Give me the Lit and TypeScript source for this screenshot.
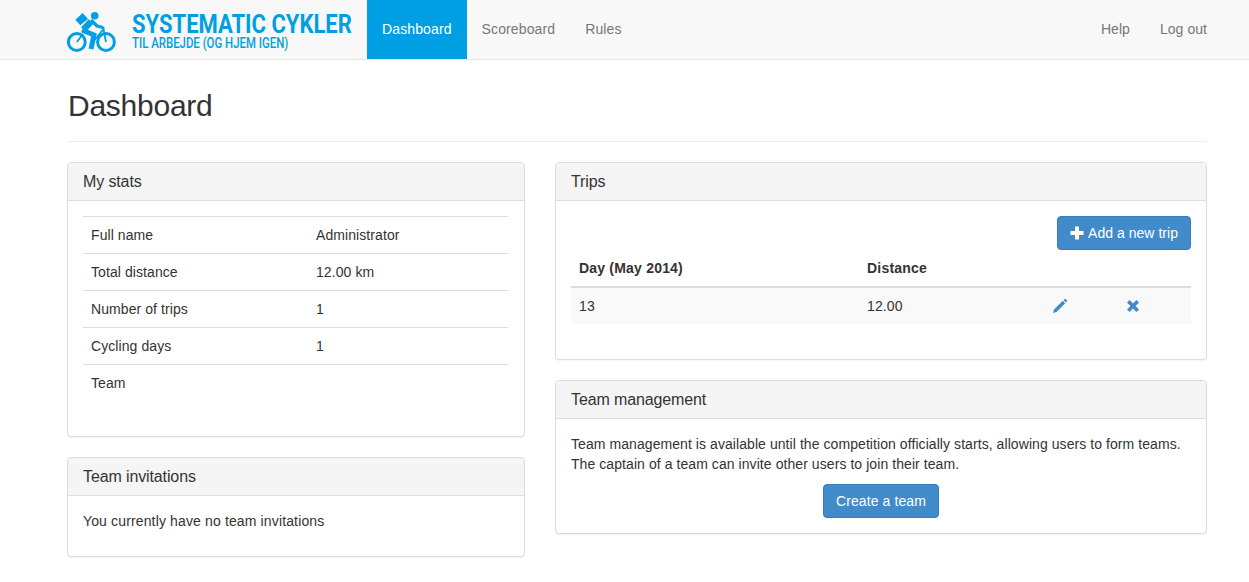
import { LitElement, html, css, svg } from 'lit';
import { customElement } from 'lit/decorators.js';

const BLUE = '#009fe3';

// cyclist logo, drawn by hand
const logo = html`<svg class="logo" width="50" height="42" viewBox="0 0 50 42" fill="none" stroke="${BLUE}">
  ${svg`
    <circle cx="9.8" cy="30" r="8.4" stroke-width="3"></circle>
    <circle cx="39" cy="30" r="8.4" stroke-width="3"></circle>
    <path d="M9.8 30 L16 22 M26 30 L36.5 17 L39 30 M32.5 14.5 L37.5 16" stroke-width="1.8"></path>
    <path d="M24 9.5 L16.5 17.5" stroke-width="6.5"></path>
    <path d="M24 8 L30 14 L36 15.5" stroke-width="3.2"></path>
    <path d="M15 18 L27 23 L24 37" stroke-width="5"></path>
    <circle cx="27.7" cy="3.8" r="3.8" fill="${BLUE}" stroke="none"></circle>
    <path d="M8.3 7.7 L15.7 1 L21 7 L13.3 13.3 Z" fill="${BLUE}" stroke="none"></path>
  `}
</svg>`;

const plus = html`<svg class="glyph" width="14" height="14" viewBox="0 0 14 14" fill="currentColor">
  ${svg`<path d="M5 .5h4V5h4.5v4H9v4.5H5V9H.5V5H5z"></path>`}
</svg>`;

const pencil = html`<svg width="16" height="16" viewBox="0 0 16 16" fill="#428bca">
  ${svg`<path d="M1 15 L2 11.4 L10.8 2.8 L13.2 5.2 L4.6 14 Z M11.6 2 L12.6 1 Q13.1 .6 13.6 1 L15 2.4 Q15.4 2.9 15 3.4 L14 4.4 Z"></path>`}
</svg>`;

const cross = html`<svg class="cross" width="14" height="14" viewBox="0 0 14 14" fill="#428bca">
  ${svg`<path d="M3.6 1 L7 4.4 L10.4 1 L13 3.6 L9.6 7 L13 10.4 L10.4 13 L7 9.6 L3.6 13 L1 10.4 L4.4 7 L1 3.6 Z"></path>`}
</svg>`;

@customElement('app-root')
export class AppRoot extends LitElement {
  static styles = css`
    :host {
      display: block;
      font-family: 'Liberation Sans', Arial, sans-serif;
      font-size: 14px;
      line-height: 20px;
      color: #333;
      background: #fff;
      height: 582px;
      overflow: hidden;
    }
    .navbar {
      height: 59px;
      background: #f8f8f8;
      border-bottom: 1px solid #e7e7e7;
      display: flex;
      padding: 0 42px 0 67px;
    }
    .brand {
      width: 300px;
      display: flex;
      align-items: center;
      gap: 15px;
    }
    .logo {
      flex-shrink: 0;
      align-self: flex-start;
      margin-top: 12px;
    }
    .brand-text {
      color: #009fe3;
      font-family: Roboto, 'Liberation Sans', sans-serif;
      padding-top: 3px;
    }
    /* no condensed family is installed, so the wordmark is squeezed */
    .brand-title {
      font-size: 25px;
      font-weight: 700;
      line-height: 24px;
      white-space: nowrap;
      transform: scaleX(0.88);
      transform-origin: left center;
    }
    .brand-sub {
      font-size: 14px;
      font-weight: 500;
      line-height: 13px;
      white-space: nowrap;
      transform: scaleX(0.815);
      transform-origin: left center;
    }
    .nav {
      display: flex;
    }
    .nav a {
      padding: 0 15px;
      line-height: 59px;
      color: #777;
      letter-spacing: 0.12px;
    }
    .nav a.active {
      color: #fff;
      background: #009fe3;
    }
    .nav.right {
      margin-left: auto;
    }
    .nav.right a {
      letter-spacing: 0.05px;
    }
    .nav.right a:last-child {
      padding-right: 0;
    }
    .page {
      width: 1140px;
      margin-left: 67px;
    }
    .page-header {
      padding: 26px 0 15px;
      border-bottom: 1px solid #eee;
      margin-bottom: 20px;
    }
    h1 {
      margin: 0 0 0 1px;
      font-size: 30px;
      line-height: 40px;
      font-weight: 400;
      letter-spacing: -0.25px;
    }
    .cols {
      display: grid;
      grid-template-columns: 458px 652px;
      gap: 30px;
      align-items: start;
    }
    .panel {
      border: 1px solid #ddd;
      border-radius: 4px;
      box-shadow: 0 1px 1px rgba(0, 0, 0, 0.05);
      margin-bottom: 20px;
      background: #fff;
    }
    .panel-heading {
      height: 37px;
      line-height: 37px;
      padding: 0 15px;
      font-size: 16px;
      letter-spacing: -0.12px;
      background: #f5f5f5;
      border-bottom: 1px solid #ddd;
      border-radius: 3px 3px 0 0;
    }
    .panel-body {
      padding: 15px;
    }
    p {
      margin: 0 0 10px;
      letter-spacing: 0.07px;
    }
    p.invites {
      letter-spacing: 0.14px;
    }
    table {
      border-collapse: collapse;
      margin-bottom: 20px;
    }
    td,
    th {
      padding: 8px;
      text-align: left;
      line-height: 20px;
    }
    .stats {
      width: 425px;
      letter-spacing: 0.08px;
    }
    .stats td {
      border-top: 1px solid #ddd;
    }
    .stats td:first-child {
      width: 209px;
    }
    .trips {
      width: 100%;
      letter-spacing: 0.1px;
    }
    .trips th {
      border-bottom: 2px solid #ddd;
      letter-spacing: 0.2px;
    }
    .trips tbody tr {
      background: #f9f9f9;
    }
    .trips .day {
      width: 272px;
    }
    .trips .dist {
      width: 169px;
    }
    .trips .edit {
      width: 58px;
    }
    .trips svg {
      display: block;
    }
    .trips .cross {
      margin-top: -1px;
    }
    .actions {
      display: flex;
      justify-content: flex-end;
    }
    .center {
      display: flex;
      justify-content: center;
    }
    .btn {
      display: inline-flex;
      align-items: center;
      height: 34px;
      box-sizing: border-box;
      padding: 0 12px;
      color: #fff;
      background: #428bca;
      border: 1px solid #357ebd;
      border-radius: 4px;
      letter-spacing: 0.1px;
    }
    .actions .btn {
      letter-spacing: 0.03px;
    }
    .glyph {
      margin-right: 4px;
    }
  `;

  render() {
    const stats = [
      ['Full name', 'Administrator'],
      ['Total distance', '12.00 km'],
      ['Number of trips', '1'],
      ['Cycling days', '1'],
      ['Team', ''],
    ];
    return html`
      <nav class="navbar">
        <div class="brand">
          ${logo}
          <div class="brand-text">
            <div class="brand-title">SYSTEMATIC CYKLER</div>
            <div class="brand-sub">TIL ARBEJDE (OG HJEM IGEN)</div>
          </div>
        </div>
        <div class="nav">
          <a class="active">Dashboard</a>
          <a>Scoreboard</a>
          <a>Rules</a>
        </div>
        <div class="nav right">
          <a>Help</a>
          <a>Log out</a>
        </div>
      </nav>
      <main class="page">
        <div class="page-header"><h1>Dashboard</h1></div>
        <div class="cols">
          <div>
            <section class="panel">
              <div class="panel-heading">My stats</div>
              <div class="panel-body">
                <table class="stats">
                  ${stats.map(([k, v]) => html`<tr><td>${k}</td><td>${v}</td></tr>`)}
                </table>
              </div>
            </section>
            <section class="panel">
              <div class="panel-heading">Team invitations</div>
              <div class="panel-body"><p class="invites">You currently have no team invitations</p></div>
            </section>
          </div>
          <div>
            <section class="panel">
              <div class="panel-heading">Trips</div>
              <div class="panel-body">
                <div class="actions"><a class="btn">${plus}Add a new trip</a></div>
                <table class="trips">
                  <thead>
                    <tr>
                      <th class="day">Day (May 2014)</th>
                      <th class="dist">Distance</th>
                      <th class="edit"></th>
                      <th></th>
                    </tr>
                  </thead>
                  <tbody>
                    <tr>
                      <td>13</td>
                      <td>12.00</td>
                      <td>${pencil}</td>
                      <td>${cross}</td>
                    </tr>
                  </tbody>
                </table>
              </div>
            </section>
            <section class="panel">
              <div class="panel-heading">Team management</div>
              <div class="panel-body">
                <p>
                  Team management is available until the competition officially starts, allowing users to form teams.
                  The captain of a team can invite other users to join their team.
                </p>
                <div class="center"><a class="btn">Create a team</a></div>
              </div>
            </section>
          </div>
        </div>
      </main>
    `;
  }
}
